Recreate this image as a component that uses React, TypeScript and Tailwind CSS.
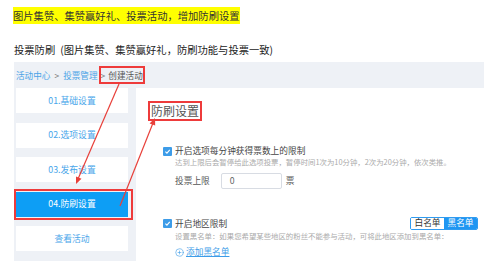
import { CirclePlus } from 'lucide-react'

const steps = ['01.基础设置', '02.选项设置', '03.发布设置', '04.防刷设置', '查看活动']

function Check() {
  return (
    <span className="flex h-[9px] w-[9px] shrink-0 items-center justify-center rounded-[1px] bg-[#3d9ce8]">
      <svg width="7" height="7" viewBox="0 0 10 10">
        <path d="M2 5.2 L4.2 7.4 L8.2 2.8" fill="none" stroke="white" strokeWidth="1.6" />
      </svg>
    </span>
  )
}

export default function App() {
  return (
    <div
      className="relative h-[261px] w-[484px] overflow-hidden bg-white text-[#333]"
      style={{ fontFamily: '"Noto Sans CJK SC", "Noto Sans", sans-serif' }}
    >
      {/* Notes */}
      <div className="pl-[13px] pt-[9px] text-[10.3px] leading-[14px]">
        <span className="bg-[#ffff00] py-[1px]">图片集赞、集赞赢好礼、投票活动，增加防刷设置</span>
      </div>
      <div className="mt-[20px] pl-[14px] text-[10.3px] leading-[14px] text-[#222]">
        投票防刷<span className="ml-[5px]">(图片集赞、集赞赢好礼，防刷功能与投票一致)</span>
      </div>

      {/* Admin panel */}
      <div className="ml-[14px] mt-[5px] flex flex-col bg-[#eef1f6]">
        <div className="flex h-[26px] items-center pl-[2px] text-[8.6px] leading-none">
          <span className="text-[#4aa3e6]">活动中心</span>
          <span className="mx-[4px] text-[#777]">&gt;</span>
          <span className="text-[#4aa3e6]">投票管理</span>
          <span className="relative ml-[3px] text-[#555]">
            <span className="mr-[3px] text-[#777]">&gt;</span>
            创建活动
            <span className="absolute -bottom-[5px] -left-[2px] -right-[2px] -top-[5px] border-2 border-[#ee3b3b]" />
          </span>
        </div>

        <div className="flex h-[173px]">
          {/* Steps */}
          <div className="flex w-[122px] flex-col gap-[9.5px] pl-[2px] pr-[8px]">
            {steps.map((s, i) => (
              <div
                key={s}
                className={
                  i === 3
                    ? 'relative flex h-[25px] items-center justify-center bg-[#0d9ef5] text-[8.8px] text-white'
                    : 'flex h-[25px] items-center justify-center bg-white text-[8.8px] text-[#49a6ea]'
                }
              >
                {s}
                {i === 3 && (
                  <span className="absolute -bottom-[3px] -left-[2px] -right-[5px] -top-[3px] border-2 border-[#ee3b3b]" />
                )}
              </div>
            ))}
          </div>

          {/* Content */}
          <div className="flex-1 bg-white pl-[12px] pt-[9px]">
            <div className="inline-flex h-[20px] items-center border-2 border-[#ee3b3b] px-[1px] text-[12px] leading-none text-[#555]">
              防刷设置
            </div>

            <div className="ml-[15px] mt-[24px] flex items-center gap-[3px] text-[8.7px] leading-[12px] text-[#444]">
              <Check />
              <span>开启选项每分钟获得票数上的限制</span>
            </div>
            <div className="ml-[27px] text-[7.4px] leading-[10px] text-[#aaa]">
              达到上限后会暂停给此选项投票，暂停时间1次为10分钟，2次为20分钟，依次类推。
            </div>
            <div className="ml-[27px] mt-[6px] flex items-center text-[8.7px] text-[#555]">
              <span>投票上限</span>
              <span className="ml-[11px] flex h-[16px] w-[61px] items-center rounded-[2px] border border-[#d8dce3] pl-[8px] text-[#666]">
                0
              </span>
              <span className="ml-[4px]">票</span>
            </div>

            <div className="mt-[28px] flex items-center pr-[6px]">
              <div className="ml-[15px] flex items-center gap-[3px] text-[8.7px] leading-[12px] text-[#444]">
                <Check />
                <span>开启地区限制</span>
              </div>
              <div className="ml-auto flex h-[13px] overflow-hidden rounded-[2px] border border-[#2f9bf0] text-[8.7px] leading-none">
                <span className="flex w-[33px] items-center justify-center bg-white text-[#333]">白名单</span>
                <span className="flex w-[33px] items-center justify-center bg-[#1f96f2] text-white">黑名单</span>
              </div>
            </div>
            <div className="ml-[27px] mt-[1px] text-[7.4px] leading-[10px] text-[#aaa]">
              设置黑名单：如果您希望某些地区的粉丝不能参与活动，可将此地区添加到黑名单：
            </div>
            <div className="ml-[27px] mt-[5px] flex items-center gap-[2px] text-[8.7px] leading-[12px] text-[#3d9ce8]">
              <CirclePlus size={9} strokeWidth={1.6} />
              <span className="underline">添加黑名单</span>
            </div>
          </div>
        </div>
      </div>

      {/* Annotation arrows */}
      <svg className="pointer-events-none absolute inset-0" width="484" height="261">
        <line x1="119" y1="84" x2="78" y2="179" stroke="#e8403a" strokeWidth="1.2" />
        <polygon points="76,184 81.5,178.8 76,176.4" fill="#e8403a" />
        <line x1="120" y1="206" x2="153" y2="123" stroke="#e8403a" strokeWidth="1.2" />
        <polygon points="155,118 155.2,125.6 149.6,123.4" fill="#e8403a" />
      </svg>
    </div>
  )
}
